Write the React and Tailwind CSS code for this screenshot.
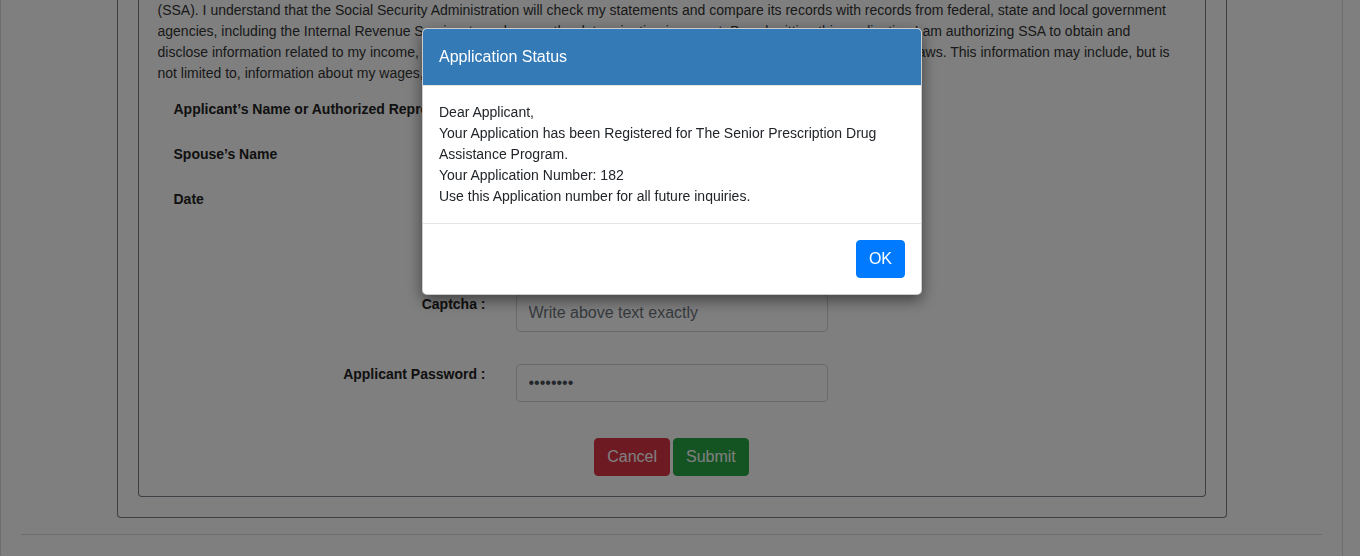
export default function App() {
  return (
    <div className="relative h-screen overflow-hidden bg-white font-['Liberation_Sans',Arial,sans-serif] text-[14px] leading-[21px] text-[#333]">
      {/* Page */}
      <div className="h-full w-[1343px] border-x border-[#dcdcdc] px-5">
        <div className="mx-auto w-[1110px] rounded-b border-x border-b border-[#7a8088] px-5 pb-5">
          <div className="rounded-b border-x border-b border-[#7a8088] px-[19px] pb-5">
            <p>
              <span className="block whitespace-nowrap">(SSA). I understand that the Social Security Administration will check my statements and compare its records with records from federal, state and local government</span>
              <span className="block whitespace-nowrap">agencies, including the Internal Revenue Service, to make sure the determination is correct. By submitting this application I am authorizing SSA to obtain and</span>
              <span className="block whitespace-nowrap">disclose information related to my income, resources, and other eligibility factors from source as authorized under Federal laws. This information may include, but is</span>
              <span className="block whitespace-nowrap">not limited to, information about my wages, savings, investments, pensions and other income.</span>
            </p>

            <div className="mt-[15px] pl-4 font-bold text-[#222]">
              <div className="h-[45px]">Applicant’s Name or Authorized Representative</div>
              <div className="h-[45px]">Spouse’s Name</div>
              <div className="h-[21px]">Date</div>
            </div>

            {/* captcha image row sits behind the dialog */}
            <div className="h-[84px]" />

            <div className="flex items-start gap-[30px]">
              <label className="w-[328px] text-right font-bold text-[#222]">Captcha :</label>
              <input
                type="text"
                placeholder="Write above text exactly"
                className="h-[38px] w-[312px] rounded border border-[#ced4da] px-3 text-[16px] text-[#495057] outline-none placeholder:text-[#6c757d]"
              />
            </div>

            <div className="mt-8 flex items-start gap-[30px]">
              <label className="w-[328px] text-right font-bold text-[#222]">Applicant Password :</label>
              <input
                type="password"
                readOnly
                value="password"
                className="h-[38px] w-[312px] rounded border border-[#ced4da] px-3 text-[16px] text-[#495057] outline-none"
              />
            </div>

            <div className="mt-9 flex justify-center gap-[3px]">
              <button className="h-[38px] rounded border border-[#dc3545] bg-[#dc3545] px-3 text-[16px] leading-6 text-white">Cancel</button>
              <button className="h-[38px] rounded border border-[#28a745] bg-[#28a745] px-3 text-[16px] leading-6 text-white">Submit</button>
            </div>
          </div>
        </div>
        <hr className="mt-4 border-t border-[#dcdcdc]" />
      </div>

      {/* Backdrop */}
      <div className="fixed inset-0 bg-black/50" />

      {/* Dialog */}
      <div className="fixed left-[422px] top-[28px] w-[500px] overflow-hidden rounded-[5px] border border-black/20 bg-white shadow-[0_5px_15px_rgba(0,0,0,0.5)]">
        <div className="border-b border-[#e5e5e5] bg-[#337ab7] px-4 py-4 text-[16px] leading-6 text-white">Application Status</div>
        <div className="border-b border-[#e5e5e5] p-4 text-[#212529]">
          Dear Applicant,
          <br />
          Your Application has been Registered for The Senior Prescription Drug Assistance Program.
          <br />
          Your Application Number: 182
          <br />
          Use this Application number for all future inquiries.
        </div>
        <div className="flex justify-end p-4">
          <button className="h-[38px] rounded border border-[#007bff] bg-[#007bff] px-3 text-[16px] leading-6 text-white">OK</button>
        </div>
      </div>
    </div>
  )
}
